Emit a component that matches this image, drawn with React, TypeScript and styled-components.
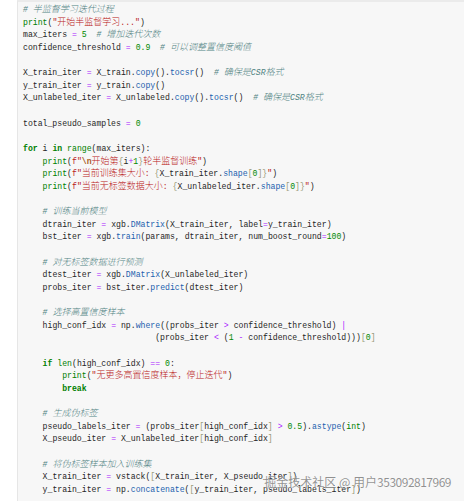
import React from "react";
import styled, { createGlobalStyle, css } from "styled-components";

const GlobalStyle = createGlobalStyle`
  html, body { margin: 0; padding: 0; background: #ffffff; }
  body { width: 464px; height: 501px; overflow: hidden; }
`;

type Kind = "plain" | "kw" | "builtin" | "num" | "str" | "esc" | "op" | "attr" | "brk" | "cmt";
type Tok = [Kind, string];

const KEYWORDS = new Set(["for", "in", "if", "break"]);
const BUILTINS = new Set(["print", "range", "len", "int"]);

function tokenize(line: string): Tok[] {
  const out: Tok[] = [];
  let i = 0;
  let afterDot = false;
  const n = line.length;
  while (i < n) {
    const c = line[i];
    if (c === "#") {
      out.push(["cmt", line.slice(i)]);
      break;
    }
    if (c === " ") {
      let j = i;
      while (j < n && line[j] === " ") j++;
      out.push(["plain", line.slice(i, j)]);
      i = j;
      continue;
    }
    if (/[A-Za-z_]/.test(c)) {
      let j = i;
      while (j < n && /[A-Za-z0-9_]/.test(line[j])) j++;
      const word = line.slice(i, j);
      if (word === "f" && line[j] === '"') {
        out.push(["str", 'f"']);
        let k = j + 1;
        let buf = "";
        while (k < n && line[k] !== '"') {
          if (line[k] === "\\") {
            if (buf) { out.push(["str", buf]); buf = ""; }
            out.push(["esc", line.slice(k, k + 2)]);
            k += 2;
            continue;
          }
          if (line[k] === "{") {
            if (buf) { out.push(["str", buf]); buf = ""; }
            out.push(["brk", "{"]);
            let e = k + 1;
            while (e < n && line[e] !== "}") e++;
            out.push(...tokenize(line.slice(k + 1, e)));
            out.push(["brk", "}"]);
            k = e + 1;
            continue;
          }
          buf += line[k];
          k++;
        }
        buf += '"';
        out.push(["str", buf]);
        i = k + 1;
        afterDot = false;
        continue;
      }
      let kind: Kind = "plain";
      if (afterDot) kind = "attr";
      else if (KEYWORDS.has(word)) kind = "kw";
      else if (BUILTINS.has(word)) kind = "builtin";
      out.push([kind, word]);
      i = j;
      afterDot = false;
      continue;
    }
    if (/[0-9]/.test(c)) {
      let j = i;
      while (j < n && /[0-9.]/.test(line[j])) j++;
      out.push(["num", line.slice(i, j)]);
      i = j;
      afterDot = false;
      continue;
    }
    if (c === '"') {
      let j = i + 1;
      while (j < n && line[j] !== '"') j++;
      out.push(["str", line.slice(i, j + 1)]);
      i = j + 1;
      afterDot = false;
      continue;
    }
    if (c === "=" && line[i + 1] === "=") {
      out.push(["op", "=="]);
      i += 2;
      continue;
    }
    if ("=<>|-+".includes(c)) {
      out.push(["op", c]);
      i++;
      afterDot = false;
      continue;
    }
    if ("[]{}".includes(c)) {
      out.push(["brk", c]);
      i++;
      afterDot = false;
      continue;
    }
    if (c === ".") {
      out.push(["plain", "."]);
      afterDot = true;
      i++;
      continue;
    }
    out.push(["plain", c]);
    afterDot = false;
    i++;
  }
  return out;
}

const CODE = [
  "# 半监督学习迭代过程",
  'print("开始半监督学习...")',
  "max_iters = 5  # 增加迭代次数",
  "confidence_threshold = 0.9  # 可以调整置信度阈值",
  "",
  "X_train_iter = X_train.copy().tocsr()  # 确保是CSR格式",
  "y_train_iter = y_train.copy()",
  "X_unlabeled_iter = X_unlabeled.copy().tocsr()  # 确保是CSR格式",
  "",
  "total_pseudo_samples = 0",
  "",
  "for i in range(max_iters):",
  '    print(f"\\n开始第{i+1}轮半监督训练")',
  '    print(f"当前训练集大小: {X_train_iter.shape[0]}")',
  '    print(f"当前无标签数据大小: {X_unlabeled_iter.shape[0]}")',
  "",
  "    # 训练当前模型",
  "    dtrain_iter = xgb.DMatrix(X_train_iter, label=y_train_iter)",
  "    bst_iter = xgb.train(params, dtrain_iter, num_boost_round=100)",
  "",
  "    # 对无标签数据进行预测",
  "    dtest_iter = xgb.DMatrix(X_unlabeled_iter)",
  "    probs_iter = bst_iter.predict(dtest_iter)",
  "",
  "    # 选择高置信度样本",
  "    high_conf_idx = np.where((probs_iter > confidence_threshold) |",
  "                           (probs_iter < (1 - confidence_threshold)))[0]",
  "",
  "    if len(high_conf_idx) == 0:",
  '        print("无更多高置信度样本，停止迭代")',
  "        break",
  "",
  "    # 生成伪标签",
  "    pseudo_labels_iter = (probs_iter[high_conf_idx] > 0.5).astype(int)",
  "    X_pseudo_iter = X_unlabeled_iter[high_conf_idx]",
  "",
  "    # 将伪标签样本加入训练集",
  "    X_train_iter = vstack([X_train_iter, X_pseudo_iter])",
  "    y_train_iter = np.concatenate([y_train_iter, pseudo_labels_iter])",
];

const Page = styled.div`
  padding-left: 17px;
  height: 501px;
  position: relative;
  box-sizing: border-box;
`;

const Panel = styled.div`
  background: #f7f7f7;
  border-left: 1px solid #e6e6e6;
  border-top: 2px solid #ebebeb;
  height: 501px;
  box-sizing: border-box;
  padding: 2px 0 0 5px;
  overflow: hidden;
`;

const Line = styled.div`
  height: 12.63px;
  line-height: 12.63px;
  white-space: pre;
  font-family: "Liberation Mono", "DejaVu Sans Mono", monospace;
  font-size: 8.17px;
  color: #262626;
`;

const kindStyles: Record<Kind, ReturnType<typeof css>> = {
  plain: css``,
  kw: css`color: #008000; font-weight: bold;`,
  builtin: css`color: #008000;`,
  num: css`color: #008800;`,
  str: css`color: #ba2121;`,
  esc: css`color: #aa5d1f; font-weight: bold;`,
  op: css`color: #aa22ff;`,
  attr: css`color: #1c5fae;`,
  brk: css`color: #999977;`,
  cmt: css`color: #4f8282; font-style: italic;`,
};

const Tk = styled.span<{ $kind: Kind }>`
  ${(p) => kindStyles[p.$kind]}
`;

const Cjk = styled.span`
  font-family: "Noto Sans CJK SC", sans-serif;
  font-size: 9px;
  font-weight: 300;
  line-height: 0;
`;

const Watermark = styled.div`
  position: absolute;
  right: 13px;
  bottom: 12px;
  font-family: "Noto Sans CJK SC", sans-serif;
  font-size: 12px;
  line-height: 14px;
  color: rgba(110, 110, 110, 0.75);
  text-shadow: 0 0 1px rgba(255, 255, 255, 0.9);
  white-space: pre;
  pointer-events: none;
`;

const Digits = styled.span`
  letter-spacing: -0.5px;
`;

function renderText(text: string, key: string) {
  const parts = text.split(/([\u3000-\u303f\u4e00-\u9fff\uff00-\uffef]+)/);
  return parts.map((p, idx) =>
    /[\u3000-\u303f\u4e00-\u9fff\uff00-\uffef]/.test(p) ? (
      <Cjk key={key + "-" + idx}>{p}</Cjk>
    ) : (
      <React.Fragment key={key + "-" + idx}>{p}</React.Fragment>
    )
  );
}

export default function App() {
  return (
    <>
      <GlobalStyle />
      <Page>
        <Panel>
          {CODE.map((line, li) => (
            <Line key={li}>
              {line === ""
                ? " "
                : tokenize(line).map(([k, t], ti) => (
                    <Tk key={ti} $kind={k}>
                      {renderText(t, `${li}-${ti}`)}
                    </Tk>
                  ))}
            </Line>
          ))}
        </Panel>
        <Watermark>
          掘金技术社区 @ 用户<Digits>353092817969</Digits>
        </Watermark>
      </Page>
    </>
  );
}
